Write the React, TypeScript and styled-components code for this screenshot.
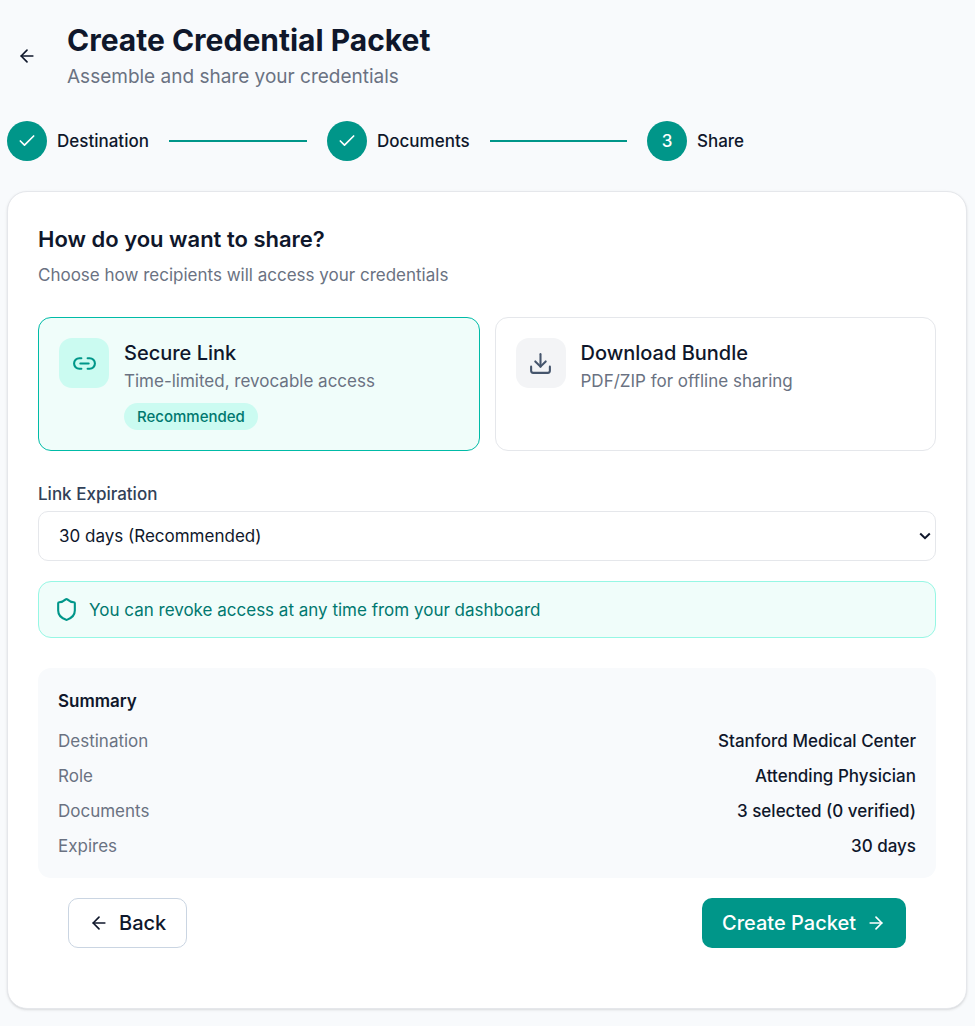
import React, { useState } from "react";
import styled, { createGlobalStyle } from "styled-components";
import { ArrowLeft, ArrowRight, Check, Download, Link2, Shield } from "lucide-react";

const GlobalStyle = createGlobalStyle`
  *, *::before, *::after { box-sizing: border-box; }
  body {
    margin: 0;
    background: #f8fafc;
    color: #0f172b;
    font-family: Inter, "Liberation Sans", sans-serif;
    font-size: 17px;
    line-height: 27px;
  }
  h1, h2, h3, p, dl, dd, ol { margin: 0; padding: 0; }
  button, select { font: inherit; color: inherit; }
`;

const Page = styled.main`
  max-width: 975px;
  margin: 0 auto;
  padding: 21px 8px 16px 7px;
`;

const Header = styled.header`
  display: flex;
  align-items: center;
  gap: 20px;
  margin-bottom: 30px;
`;

const IconButton = styled.button`
  display: grid;
  place-items: center;
  width: 40px;
  height: 40px;
  padding: 0;
  border: 0;
  border-radius: 10px;
  background: transparent;
  cursor: pointer;
`;

const Title = styled.h1`
  margin-bottom: 4px;
  font-size: 30px;
  font-weight: 700;
  line-height: 38px;
`;

const Subtitle = styled.p`
  color: #6a7282;
  font-size: 19px;
  line-height: 28px;
`;

const Steps = styled.ol`
  display: grid;
  grid-template-columns: repeat(3, 1fr);
  margin-bottom: 30px;
  list-style: none;
`;

const Step = styled.li`
  display: flex;
  align-items: center;
  gap: 10px;
  font-weight: 500;
`;

const StepMark = styled.span`
  display: grid;
  place-items: center;
  flex: none;
  width: 40px;
  height: 40px;
  border-radius: 50%;
  background: #009689;
  color: #fff;
`;

const StepLine = styled.span`
  flex: 1;
  height: 2px;
  margin: 0 20px 0 10px;
  background: #009689;
`;

const Card = styled.section`
  padding: 30px;
  border: 1px solid #e5e7eb;
  border-radius: 20px;
  background: #fff;
  box-shadow: 0 1px 3px rgba(0, 0, 0, 0.1), 0 1px 2px -1px rgba(0, 0, 0, 0.1);
`;

const SectionTitle = styled.h2`
  margin-bottom: 5px;
  font-size: 22px;
  font-weight: 600;
  line-height: 35px;
`;

const Muted = styled.p`
  color: #6a7282;
`;

const Options = styled.div`
  display: grid;
  grid-template-columns: 1fr 1fr;
  gap: 15px;
  margin: 28px 0 30px;
`;

const Option = styled.label<{ $selected: boolean }>`
  display: flex;
  align-items: flex-start;
  gap: 15px;
  padding: 20px;
  border: 1px solid ${(p) => (p.$selected ? "#00bba7" : "#e5e7eb")};
  border-radius: 13px;
  background: ${(p) => (p.$selected ? "#f0fdfa" : "#fff")};
  cursor: pointer;
`;

const HiddenRadio = styled.input`
  position: absolute;
  width: 1px;
  height: 1px;
  margin: 0;
  opacity: 0;
`;

const OptionIcon = styled.span<{ $selected: boolean }>`
  display: grid;
  place-items: center;
  flex: none;
  width: 50px;
  height: 50px;
  border-radius: 13px;
  background: ${(p) => (p.$selected ? "#cbfbf1" : "#f3f4f6")};
  color: ${(p) => (p.$selected ? "#009689" : "#45556c")};
`;

const OptionText = styled.span`
  display: flex;
  flex-direction: column;
  align-items: flex-start;
`;

const OptionTitle = styled.span`
  font-size: 20px;
  font-weight: 500;
  line-height: 30px;
`;

const OptionNote = styled.span`
  color: #6a7282;
`;

const Badge = styled.span`
  margin-top: 8px;
  padding: 1px 13px;
  border-radius: 14px;
  background: #cbfbf1;
  color: #00786f;
  font-size: 15px;
  font-weight: 500;
  line-height: 25px;
`;

const FieldLabel = styled.label`
  display: block;
  margin-bottom: 3px;
  color: #314158;
  font-weight: 500;
`;

const SelectBox = styled.div`
  display: grid;
  align-items: center;

  select, svg { grid-area: 1 / 1; }
  svg {
    justify-self: end;
    margin-right: 5px;
    pointer-events: none;
  }
`;

const Select = styled.select`
  appearance: none;
  width: 100%;
  height: 50px;
  padding: 0 30px 0 20px;
  border: 1px solid #e5e7eb;
  border-radius: 10px;
  background: #fff;
`;

const Notice = styled.div`
  display: flex;
  align-items: flex-start;
  gap: 10px;
  margin: 20px 0 30px;
  padding: 15px 15px 13px;
  border: 1px solid #96f7e4;
  border-radius: 13px;
  background: #f0fdfa;
  color: #00786f;

  svg { flex: none; color: #009689; }
`;

const Summary = styled.section`
  padding: 20px 20px 18px;
  border-radius: 13px;
  background: #f8fafc;
`;

const SummaryTitle = styled.h3`
  margin-bottom: 13px;
  font-size: 17px;
  font-weight: 600;
`;

const SummaryList = styled.dl`
  display: grid;
  gap: 8px;
`;

const SummaryRow = styled.div`
  display: flex;
  justify-content: space-between;

  dt { color: #6a7282; }
  dd { font-weight: 500; }
`;

const Actions = styled.div`
  display: flex;
  justify-content: space-between;
  padding: 20px 30px 30px;
`;

const Button = styled.button<{ $primary?: boolean }>`
  display: flex;
  align-items: center;
  gap: 10px;
  height: 50px;
  padding: 0 20px;
  border: ${(p) => (p.$primary ? "0" : "1px solid #cad5e2")};
  border-radius: 10px;
  background: ${(p) => (p.$primary ? "#009689" : "#fff")};
  color: ${(p) => (p.$primary ? "#fff" : "#0f172b")};
  font-size: 20px;
  font-weight: 500;
  line-height: 30px;
  cursor: pointer;
`;

const steps = ["Destination", "Documents", "Share"];

const options = [
  { id: "link", title: "Secure Link", note: "Time-limited, revocable access", icon: Link2, recommended: true },
  { id: "bundle", title: "Download Bundle", note: "PDF/ZIP for offline sharing", icon: Download, recommended: false },
];

export default function App() {
  const [method, setMethod] = useState("link");
  const [days, setDays] = useState("30");

  const summary = [
    ["Destination", "Stanford Medical Center"],
    ["Role", "Attending Physician"],
    ["Documents", "3 selected (0 verified)"],
    ["Expires", `${days} days`],
  ];

  return (
    <>
      <GlobalStyle />
      <Page>
        <Header>
          <IconButton type="button" aria-label="Go back">
            <ArrowLeft size={20} />
          </IconButton>
          <div>
            <Title>Create Credential Packet</Title>
            <Subtitle>Assemble and share your credentials</Subtitle>
          </div>
        </Header>

        <Steps>
          {steps.map((name, i) => (
            <Step key={name}>
              <StepMark>{i < 2 ? <Check size={20} /> : i + 1}</StepMark>
              {name}
              {i < 2 && <StepLine />}
            </Step>
          ))}
        </Steps>

        <Card>
          <SectionTitle>How do you want to share?</SectionTitle>
          <Muted>Choose how recipients will access your credentials</Muted>

          <Options role="radiogroup" aria-label="Sharing method">
            {options.map(({ id, title, note, icon: Icon, recommended }) => (
              <Option key={id} $selected={method === id}>
                <HiddenRadio
                  type="radio"
                  name="method"
                  value={id}
                  checked={method === id}
                  onChange={() => setMethod(id)}
                />
                <OptionIcon $selected={method === id}>
                  <Icon size={25} />
                </OptionIcon>
                <OptionText>
                  <OptionTitle>{title}</OptionTitle>
                  <OptionNote>{note}</OptionNote>
                  {recommended && <Badge>Recommended</Badge>}
                </OptionText>
              </Option>
            ))}
          </Options>

          <FieldLabel htmlFor="expiration">Link Expiration</FieldLabel>
          <SelectBox>
            <Select id="expiration" value={days} onChange={(e) => setDays(e.target.value)}>
              <option value="7">7 days</option>
              <option value="30">30 days (Recommended)</option>
              <option value="90">90 days</option>
            </Select>
            <svg width="12" height="8" viewBox="0 0 12 8" fill="none" stroke="#0f172b" strokeWidth="2" aria-hidden="true">
              <path d="M1.2 1.5 6 6.2 10.8 1.5" />
            </svg>
          </SelectBox>

          <Notice>
            <Shield size={25} />
            <span>You can revoke access at any time from your dashboard</span>
          </Notice>

          <Summary>
            <SummaryTitle>Summary</SummaryTitle>
            <SummaryList>
              {summary.map(([term, value]) => (
                <SummaryRow key={term}>
                  <dt>{term}</dt>
                  <dd>{value}</dd>
                </SummaryRow>
              ))}
            </SummaryList>
          </Summary>

          <Actions>
            <Button type="button">
              <ArrowLeft size={20} />
              Back
            </Button>
            <Button type="button" $primary>
              Create Packet
              <ArrowRight size={20} />
            </Button>
          </Actions>
        </Card>
      </Page>
    </>
  );
}
